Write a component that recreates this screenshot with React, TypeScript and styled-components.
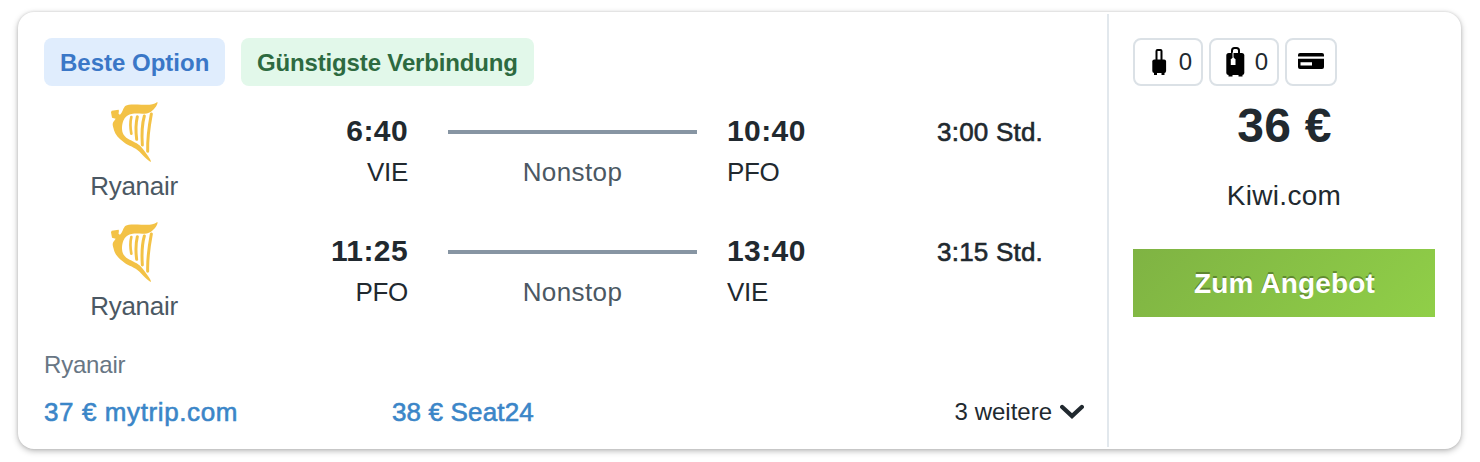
import React from 'react';
import styled, { createGlobalStyle } from 'styled-components';

const GlobalStyle = createGlobalStyle`
  * { box-sizing: border-box; }
  body {
    margin: 0;
    background: #fff;
    font-family: "Helvetica Neue", "Liberation Sans", Arial, sans-serif;
    color: #21292f;
  }
`;

const Page = styled.main`
  height: 462px;
  padding: 12px 19px 13px 18px;
  overflow: hidden;
`;

const Card = styled.article`
  display: flex;
  height: 437px;
  padding: 2px 0;
  border-radius: 16px;
  background: #fff;
  box-shadow: 0 2px 6px rgba(0, 0, 0, 0.28), 0 0 3px rgba(0, 0, 0, 0.12);
`;

const Details = styled.section`
  display: flex;
  flex-direction: column;
  width: 1091px;
  padding: 24px 23px 0 26px;
  border-right: 2px solid #e2e8ed;
`;

const Badges = styled.div`
  display: flex;
  gap: 16px;
  margin-bottom: 12px;
`;

const Badge = styled.span<{ $tone: 'blue' | 'green' }>`
  height: 48px;
  width: ${p => (p.$tone === 'blue' ? 181 : 293)}px;
  padding-left: 16px;
  border-radius: 8px;
  font-size: 24px;
  font-weight: 700;
  line-height: 50px;
  white-space: nowrap;
  letter-spacing: ${p => (p.$tone === 'blue' ? 0 : -0.15)}px;
  color: ${p => (p.$tone === 'blue' ? '#3a77c7' : '#2d6a40')};
  background: ${p => (p.$tone === 'blue' ? '#e0edfd' : '#e2f8ea')};
`;

const Leg = styled.div`
  display: grid;
  grid-template-columns: 180px 184px 40px 249px 30px 150px 166px;
  height: 120px;
`;

const Airline = styled.div`
  display: flex;
  flex-direction: column;
  align-items: center;
  padding-top: 3px;
  font-size: 26px;
  line-height: 30px;
  letter-spacing: -0.3px;
  color: #4b5863;
`;

const Logo = styled.svg`
  width: 60px;
  height: 62px;
  margin-bottom: 8px;
`;

const Stop = styled.div<{ $align: 'left' | 'right'; $col: number }>`
  grid-column: ${p => p.$col};
  padding-top: 16px;
  text-align: ${p => p.$align};
`;

const Time = styled.div`
  font-size: 30px;
  font-weight: 700;
  line-height: 34px;
  letter-spacing: 0.4px;
`;

const Airport = styled.div`
  margin-top: 9px;
  font-size: 26px;
  line-height: 30px;
  letter-spacing: -0.3px;
`;

const Route = styled.div`
  grid-column: 4;
  padding-top: 32px;
  text-align: center;
  font-size: 26px;
  line-height: 30px;
  letter-spacing: 0.4px;
  color: #4b5863;
`;

const RouteLine = styled.div`
  height: 4px;
  margin-bottom: 23px;
  background: #8795a3;
`;

const Duration = styled.div`
  grid-column: 7;
  padding-top: 19px;
  text-align: right;
  font-size: 26px;
  line-height: 30px;
  letter-spacing: 0.2px;
  -webkit-text-stroke: 0.6px currentColor;
`;

const Operator = styled.div`
  margin-top: 13px;
  font-size: 24px;
  line-height: 28px;
  letter-spacing: -0.2px;
  color: #687684;
`;

const Offers = styled.div`
  display: flex;
  align-items: center;
  height: 32px;
  margin-top: 17px;
`;

const Offer = styled.a<{ $spacing: number }>`
  width: 348px;
  font-size: 26px;
  letter-spacing: ${p => p.$spacing}px;
  color: #3b86c8;
  -webkit-text-stroke: 0.6px currentColor;
`;

const More = styled.button`
  display: flex;
  align-items: center;
  gap: 8px;
  margin-left: auto;
  padding: 0;
  border: 0;
  background: none;
  font: inherit;
  font-size: 24px;
  color: #21292f;
`;

const Booking = styled.aside`
  display: flex;
  flex: 1;
  flex-direction: column;
  align-items: center;
  padding: 24px 26px 0 24px;
`;

const Included = styled.div`
  display: flex;
  align-self: flex-start;
  gap: 6px;
`;

const Chip = styled.span<{ $wide?: boolean }>`
  display: flex;
  align-items: center;
  justify-content: space-between;
  width: ${p => (p.$wide ? 70 : 52)}px;
  height: 48px;
  padding: ${p => (p.$wide ? '0 9px 0 14px' : '0 11px')};
  border: 2px solid #dbe1e6;
  border-radius: 8px;
  font-size: 24px;
  line-height: 46px;
`;

const Price = styled.div`
  margin-top: 12px;
  padding-left: 1px;
  font-size: 48px;
  font-weight: 700;
  line-height: 56px;
  letter-spacing: 0.3px;
`;

const Provider = styled.div`
  margin-top: 26px;
  font-size: 28px;
  line-height: 32px;
  letter-spacing: 0.3px;
`;

const OfferButton = styled.button`
  width: 302px;
  height: 68px;
  margin-top: 37px;
  padding: 2px 0 0 1px;
  border: 0;
  background: linear-gradient(135deg, #7fb343, #90cf48);
  color: #fff;
  font: inherit;
  font-size: 28px;
  font-weight: 700;
  letter-spacing: 0.15px;
  text-shadow: 0 -2px 0 rgba(0, 0, 0, 0.3);
`;

const Harp = () => (
  <Logo viewBox="-6 9 180 186" fill="#f3c246">
    <path d="M154 12C140 22 126 21 106 20C88 19 66 18 59 23C51 29 50 43 42 50L38 48C37 44 40 40 38 35L17 38L15 43L18 59L29 62C25 68 20 72 20 79C20 86 23 90 24 97C28 111 39 121 50 130C61 141 80 145 95 157C108 167 116 181 134 192C137 189 130 180 126 174C116 160 107 145 92 136C79 127 62 124 53 110C46 99 47 81 52 68C57 56 66 49 80 47C101 45 119 51 135 41C147 33 157 17 154 12Z" />
    <g fill="none" stroke="#f3c246" strokeLinecap="round">
      <path d="M76 57C72 73 73 91 76 107" strokeWidth="8" />
      <path d="M94 56C89 77 89 101 92 124" strokeWidth="9" />
      <path d="M115 54C107 82 107 111 109 141" strokeWidth="9" />
      <path d="M136 48C129 85 124 122 125 160" strokeWidth="9" />
    </g>
  </Logo>
);

const CabinBag = () => (
  <svg width="20" height="28" viewBox="0 0 20 28">
    <path d="M7.500 12V3q0-1 1-1h3q1 0 1 1v9" fill="none" stroke="#000" strokeWidth="2" />
    <rect x="3.300" y="11.500" width="13.800" height="13.500" rx="2" />
    <path d="M5 24h3v3H5zM12.500 24h3v3h-3z" />
  </svg>
);

const CheckedBag = () => (
  <svg width="20" height="30" viewBox="0 0 20 30">
    <path d="M7 7V3.500q0-2.500 2.500-2.500h2q2.500 0 2.500 2.500V7" fill="none" stroke="#000" strokeWidth="2" />
    <rect x="1.300" y="6" width="18" height="22" rx="2.500" />
    <path d="M3.500 27h4v2.500h-4zM13.500 27h4v2.500h-4z" />
    <path d="M8 5.500v5" stroke="#fff" strokeWidth="1" />
    <path d="M5.800 12.500 8.200 10l2.300 2.500V18H5.800Z" fill="#fff" />
  </svg>
);

const PaymentCard = () => (
  <svg width="26" height="20" viewBox="0 0 26 20">
    <rect y="1" width="26" height="16" rx="2" />
    <path d="M0 4.500h26v2.200H0zM2.500 10.200h11.500v3.300H2.500z" fill="#fff" />
  </svg>
);

const Chevron = () => (
  <svg width="24" height="16" viewBox="0 0 24 16" fill="none" stroke="#21292f" strokeWidth="4.300" strokeLinecap="round">
    <path d="m2.200 3 9.800 9L21.800 3" />
  </svg>
);

const legs = [
  { depart: '6:40', from: 'VIE', arrive: '10:40', to: 'PFO', duration: '3:00 Std.' },
  { depart: '11:25', from: 'PFO', arrive: '13:40', to: 'VIE', duration: '3:15 Std.' },
];

export default function App() {
  return (
    <Page>
      <GlobalStyle />
      <Card>
        <Details>
          <Badges>
            <Badge $tone="blue">Beste Option</Badge>
            <Badge $tone="green">Günstigste Verbindung</Badge>
          </Badges>
          {legs.map(leg => (
            <Leg key={leg.depart}>
              <Airline><Harp />Ryanair</Airline>
              <Stop $align="right" $col={2}>
                <Time>{leg.depart}</Time>
                <Airport>{leg.from}</Airport>
              </Stop>
              <Route><RouteLine />Nonstop</Route>
              <Stop $align="left" $col={6}>
                <Time>{leg.arrive}</Time>
                <Airport>{leg.to}</Airport>
              </Stop>
              <Duration>{leg.duration}</Duration>
            </Leg>
          ))}
          <Operator>Ryanair</Operator>
          <Offers>
            <Offer $spacing={0.6}>37 € mytrip.com</Offer>
            <Offer $spacing={0.15}>38 € Seat24</Offer>
            <More>3 weitere<Chevron /></More>
          </Offers>
        </Details>
        <Booking>
          <Included>
            <Chip $wide><CabinBag />0</Chip>
            <Chip $wide><CheckedBag />0</Chip>
            <Chip><PaymentCard /></Chip>
          </Included>
          <Price>36 €</Price>
          <Provider>Kiwi.com</Provider>
          <OfferButton>Zum Angebot</OfferButton>
        </Booking>
      </Card>
    </Page>
  );
}
